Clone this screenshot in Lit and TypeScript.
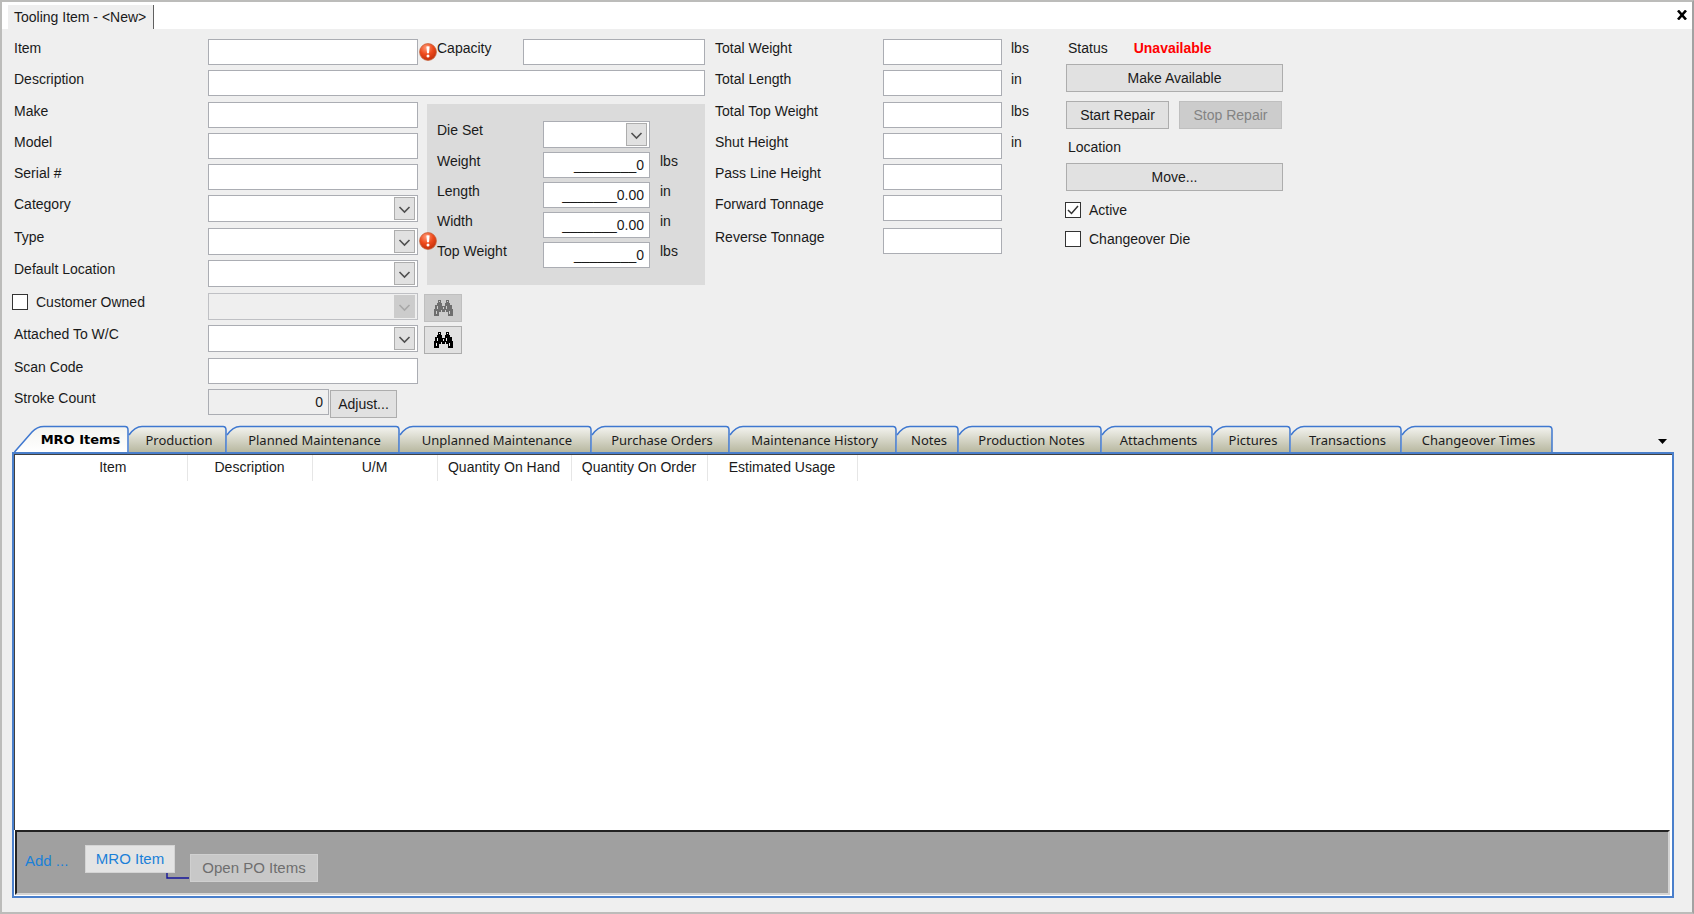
import { LitElement, html, css, svg, nothing } from "lit";
import { customElement, property, state } from "lit/decorators.js";
import { classMap } from "lit/directives/class-map.js";
import { styleMap } from "lit/directives/style-map.js";

const controls = css`
  * {
    box-sizing: border-box;
  }
  input,
  select,
  button {
    margin: 0;
    font: inherit;
    color: inherit;
    border-radius: 0;
  }
  .text {
    width: 100%;
    height: 26px;
    padding: 0 5px;
    border: 1px solid #abadb3;
    background: #fff;
    line-height: 24px;
  }
  .text.number {
    text-align: right;
  }
  .text:read-only.dim {
    background: #efefef;
  }
  .btn {
    height: 28px;
    padding: 0;
    border: 1px solid #adadad;
    background: #e1e1e1;
    line-height: 18px;
  }
  .btn:disabled {
    border-color: #bfbfbf;
    background: #cccccc;
    color: #838383;
  }
`;

@customElement("combo-box")
export class ComboBox extends LitElement {
  static styles = [
    controls,
    css`
      :host {
        display: block;
      }
      .wrap {
        position: relative;
      }
      .select {
        display: block;
        width: 100%;
        height: 27px;
        padding: 0 26px 0 4px;
        appearance: none;
        border: 1px solid #abadb3;
        background: #fff;
      }
      .select:disabled {
        background: #efefef;
      }
      .drop {
        position: absolute;
        top: 2px;
        right: 3px;
        width: 21px;
        height: 23px;
        border: 1px solid #adadad;
        background: #e1e1e1;
        color: #505050;
        pointer-events: none;
      }
      .drop.off {
        border-color: #cccccc;
        background: #cccccc;
        color: #a8a8a8;
      }
      .drop svg {
        display: block;
      }
    `,
  ];
  @property() label = "";
  @property({ type: Boolean }) disabled = false;

  render() {
    return html`<div class="wrap">
      <select class="select" aria-label=${this.label} ?disabled=${this.disabled}>
        <option></option>
      </select>
      <span class=${classMap({ drop: true, off: this.disabled })}>
        <svg width="19" height="21" viewBox="0 0 19 21">
          <path d="M4.5 9 L9.5 14 L14.5 9" fill="none" stroke="currentColor" stroke-width="1.6" />
        </svg>
      </span>
    </div>`;
  }
}

interface Sized {
  name: string;
  width: number;
}

const TABS: Sized[] = [
  { name: "MRO Items", width: 115 },
  { name: "Production", width: 98 },
  { name: "Planned Maintenance", width: 173 },
  { name: "Unplanned Maintenance", width: 192 },
  { name: "Purchase Orders", width: 138 },
  { name: "Maintenance History", width: 167 },
  { name: "Notes", width: 62 },
  { name: "Production Notes", width: 143 },
  { name: "Attachments", width: 111 },
  { name: "Pictures", width: 78 },
  { name: "Transactions", width: 111 },
  { name: "Changeover Times", width: 151 },
];

const COLUMNS: Sized[] = [
  { name: "Item", width: 172 },
  { name: "Description", width: 125 },
  { name: "U/M", width: 125 },
  { name: "Quantity On Hand", width: 134 },
  { name: "Quantity On Order", width: 136 },
  { name: "Estimated Usage", width: 150 },
];

@customElement("tab-strip")
export class TabStrip extends LitElement {
  static styles = [
    controls,
    css`
      :host {
        display: flex;
        align-items: center;
        justify-content: space-between;
        font-family: "Noto Sans", sans-serif;
        font-size: 13px;
        line-height: 18px;
        color: #1c1c1c;
      }
      .tabs {
        display: flex;
      }
      .tab {
        position: relative;
        height: 26px;
        padding: 2px 0 0 2px;
        border: 0;
        background: none;
        white-space: nowrap;
      }
      .tab.active {
        padding-left: 18px;
        font-family: "DejaVu Sans", sans-serif;
        font-weight: 700;
        color: #000;
      }
      .shape {
        position: absolute;
        inset: 0;
        overflow: visible;
      }
      .caption {
        position: relative;
      }
      .more {
        display: grid;
        place-items: center;
        width: 24px;
        height: 22px;
        padding: 4px 0 0;
        border: 0;
        background: none;
      }
    `,
  ];
  @state() private current = 0;

  private shape(index: number, active: boolean) {
    const width = TABS[index].width;
    const outline = active
      ? `M0.5 26 L18 6 Q23 0.5 30 0.5 H${width - 4} Q${width - 1} 0.5 ${width - 1} 4 V26`
      : `M0 9 Q6 0.5 13 0.5 H${width - 4} Q${width - 1} 0.5 ${width - 1} 4 V26`;
    const fill = active ? outline : `M0 26 L${outline.slice(1)}`;
    const face = `face-${index}`;
    return html`<svg class="shape" width=${width} height="26" aria-hidden="true">
      <defs>
        <linearGradient id=${face} x1="0" y1="0" x2="0" y2="1">
          <stop offset="0" stop-color="#f4f4f0" />
          <stop offset="1" stop-color=${active ? "#ffffff" : "#b8b8a0"} />
        </linearGradient>
      </defs>
      ${svg`<path d=${`${fill} Z`} fill=${`url(#${face})`} />
      <path d=${outline} fill="none" stroke="#3f78d0" stroke-width="1.5" />`}
    </svg>`;
  }

  render() {
    return html`<div class="tabs" role="tablist">
        ${TABS.map(
          (tab, i) => html`<button
            role="tab"
            class=${classMap({ tab: true, active: i === this.current })}
            style=${styleMap({ width: `${tab.width}px` })}
            aria-selected=${i === this.current}
            @click=${() => (this.current = i)}
          >
            ${this.shape(i, i === this.current)}<span class="caption">${tab.name}</span>
          </button>`
        )}
      </div>
      <button class="more" aria-label="All tabs">
        <svg width="9" height="5"><path d="M0 0 H9 L4.5 5 Z" fill="#000" /></svg>
      </button>`;
  }
}

@customElement("app-root")
export class AppRoot extends LitElement {
  static styles = [
    controls,
    css`
      :host {
        display: flex;
        flex-direction: column;
        box-sizing: border-box;
        min-height: 100vh;
        border: 2px solid #bcbcba;
        border-right-color: #a2a2a2;
        background: #efefef;
        font-family: "Liberation Sans", Arial, sans-serif;
        font-size: 14px;
        line-height: 18px;
        color: #1a1a1a;
      }
      .titlebar {
        display: flex;
        justify-content: space-between;
        height: 27px;
        padding: 3px 3px 0 6px;
        background: #fff;
      }
      .doc {
        padding: 3px 7px 0 6px;
        border-right: 1px solid #606060;
        background: #efefef;
      }
      .close {
        display: grid;
        place-items: center;
        width: 14px;
        height: 20px;
        padding: 0;
        border: 0;
        background: none;
      }
      .form {
        display: grid;
        grid-template-columns: 194px 210px 19px 86px 182px 10px 168px 119px 64px 217px 1fr;
        grid-template-rows: 31px 32px repeat(3, 31px) 33px 32px 33px 32px 33px 31px 29px;
        align-items: start;
        padding: 10px 12px 8px;
      }
      .c1 { grid-column: 1; }
      .c2 { grid-column: 2; }
      .c3 { grid-column: 3; }
      .c4 { grid-column: 4; }
      .c5 { grid-column: 5; }
      .c7 { grid-column: 7; }
      .c8 { grid-column: 8; }
      .c9 { grid-column: 9; padding-left: 9px; }
      .wide { grid-column: 2 / 6; }
      .r1 { grid-row: 1; }
      .r2 { grid-row: 2; }
      .r3 { grid-row: 3; }
      .r4 { grid-row: 4; }
      .r5 { grid-row: 5; }
      .r6 { grid-row: 6; }
      .r7 { grid-row: 7; }
      .r8 { grid-row: 8; }
      .r9 { grid-row: 9; }
      .r10 { grid-row: 10; }
      .r11 { grid-row: 11; }
      .r12 { grid-row: 12; }
      .error {
        z-index: 1;
        padding: 4px 0 0 1px;
      }
      .error svg,
      .find svg {
        display: block;
      }
      .die {
        grid-column: 3 / 6;
        grid-row: 3 / 9;
        display: grid;
        grid-template-columns: 106px 107px 1fr;
        grid-template-rows: 31px repeat(4, 30px);
        align-items: start;
        height: 181px;
        margin: 2px 0 0 9px;
        padding: 17px 10px 0;
        background: #dbdbdb;
      }
      .unit {
        padding-left: 10px;
      }
      .find {
        grid-column: 3 / 5;
        display: grid;
        place-items: center;
        justify-self: start;
        width: 38px;
        margin: 1px 0 0 6px;
      }
      .stroke {
        display: flex;
        gap: 1px;
        grid-column: 2;
      }
      .stroke .text {
        width: 121px;
      }
      .adjust {
        width: 67px;
        margin-top: 1px;
      }
      .status {
        grid-column: 10;
        grid-row: 1 / 10;
        display: flex;
        flex-direction: column;
      }
      .line {
        display: flex;
        padding-left: 2px;
      }
      .state {
        padding-left: 26px;
        font-weight: 700;
        color: #f00;
      }
      .status .btn {
        margin: 7px 0 9px;
      }
      .pair {
        display: grid;
        grid-template-columns: 103px 103px;
        gap: 10px;
      }
      .status .pair .btn {
        margin: 0 0 9px;
      }
      .check {
        display: flex;
        align-items: center;
        gap: 8px;
        margin: 1px 0 10px -1px;
      }
      .check.owner {
        grid-column: 1;
        margin: 0 0 0 -2px;
      }
      .box {
        flex: none;
        width: 16px;
        height: 16px;
        appearance: none;
        border: 1px solid #333;
        background: #fff;
      }
      .tick {
        display: grid;
      }
      .tick > * {
        grid-area: 1 / 1;
      }
      .tick svg {
        display: none;
        pointer-events: none;
      }
      .box:checked + svg {
        display: block;
      }
      .lower {
        display: flex;
        flex: 1;
        flex-direction: column;
        padding: 0 18px 14px 10px;
      }
      tab-strip {
        padding-left: 2px;
      }
      .sheet {
        display: flex;
        flex: 1;
        flex-direction: column;
        border: 2px solid #4a7fcb;
        background: #fff;
      }
      .grid {
        flex: 1;
        min-height: 120px;
        border-top: 1px solid #404040;
        border-left: 1px solid #404040;
      }
      .table {
        border-collapse: collapse;
        table-layout: fixed;
      }
      .head {
        height: 26px;
        padding: 0 0 3px;
        border-right: 1px solid #e6e6e6;
        font-weight: 400;
        text-align: center;
        white-space: nowrap;
      }
      .head:first-child {
        padding-left: 24px;
      }
      .actions {
        display: flex;
        align-items: flex-start;
        height: 65px;
        margin: 0 2px 1px 1px;
        padding: 13px 8px 0;
        border: 2px solid #222;
        border-right-color: #d4d4d4;
        border-bottom-color: #d4d4d4;
        background: #a0a0a0;
        font-size: 15px;
        color: #1a80d8;
      }
      .add {
        width: 60px;
        padding-top: 7px;
      }
      .act {
        height: 28px;
        padding: 0;
        border: 1px solid #d4d4d4;
        background: #e4e4e4;
      }
      .mro {
        width: 90px;
      }
      .open {
        width: 128px;
        margin-top: 9px;
      }
      .act:disabled {
        border-color: #d0d0d0;
        background: #c8c8c8;
        color: #6e6e6e;
      }
      .link {
        margin: 28px 0 0 -9px;
      }
    `,
  ];

  private field(label: string, row: number, col: number, cls = "") {
    const id = label.toLowerCase().replace(/\W+/g, "-");
    return html`<label class="c${col} r${row}" for=${id}>${label}</label>
      <input id=${id} class="text ${cls || `c${col + 1}`} r${row}" type="text" />`;
  }

  private combo(label: string, row: number) {
    return html`<label class="c1 r${row}">${label}</label>
      <combo-box class="c2 r${row}" label=${label}></combo-box>`;
  }

  private error(row: number) {
    const ball = `ball-${row}`;
    return html`<span class="error c3 r${row}" role="img" aria-label="Required">
      <svg width="18" height="18" viewBox="0 0 18 18">
        <defs>
          <radialGradient id=${ball} cx="0.4" cy="0.25" r="0.8">
            <stop offset="0" stop-color="#ff9a78" />
            <stop offset="0.5" stop-color="#ee4a1c" />
            <stop offset="1" stop-color="#bd2c08" />
          </radialGradient>
        </defs>
        <circle cx="9" cy="9" r="8.4" fill="url(#${ball})" stroke="#c8643f" stroke-width="0.8" />
        <path d="M7.4 3.6 Q9 2.8 10.6 3.6 L10 10.2 H8 Z" fill="#fff" />
        <circle cx="9" cy="13" r="1.5" fill="#fff" />
      </svg>
    </span>`;
  }

  private find(row: number, label: string, disabled: boolean) {
    const ink = disabled ? "#6e6e6e" : "#000";
    const gap = disabled ? "#cccccc" : "#f0f0f0";
    return html`<button class="btn find r${row}" aria-label=${label} ?disabled=${disabled}>
      <svg width="19" height="17" viewBox="0 0 19 17">
        <path
          d="M4 0 H7 V3 H8 V6 H11 V3 H12 V0 H15 V3 H16 V5 H18 V9 H19 V16 H14 V12 H12 V10 H11 V12 H8 V10 H7 V12 H5 V16 H0 V9 H1 V5 H3 V3 H4 Z"
          fill=${ink}
        />
        <path
          d="M5 1 h1 v1 h-1 Z M13 1 h1 v1 h-1 Z M3 6 h1 v3 h-1 Z M2 11 h1 v3 h-1 Z M12 6 h1 v3 h-1 Z M15 11 h1 v3 h-1 Z M9 7 h1 v2 h-1 Z"
          fill=${gap}
        />
      </svg>
    </button>`;
  }

  private measure(label: string, value: string, unit: string) {
    const id = `die-${label.toLowerCase().replace(" ", "-")}`;
    return html`<label for=${id}>${label}</label>
      <input id=${id} class="text number" type="text" .value=${value} />
      <span class="unit">${unit}</span>`;
  }

  private check(label: string, checked: boolean, cls = "") {
    return html`<label class="check ${cls}">
      <span class="tick">
        <input class="box" type="checkbox" .checked=${checked} />
        <svg width="16" height="16"><path d="M3 8 L6.5 11.5 L13 4" fill="none" stroke="#333" stroke-width="1.5" /></svg>
      </span>
      ${label}
    </label>`;
  }

  render() {
    const totals: [string, string][] = [
      ["Total Weight", "lbs"],
      ["Total Length", "in"],
      ["Total Top Weight", "lbs"],
      ["Shut Height", "in"],
      ["Pass Line Height", ""],
      ["Forward Tonnage", ""],
      ["Reverse Tonnage", ""],
    ];
    return html`
      <header class="titlebar">
        <span class="doc">Tooling Item - &lt;New&gt;</span>
        <button class="close" aria-label="Close">
          <svg width="10" height="10"><path d="M1 0.5 L9 9.5 M9 0.5 L1 9.5" stroke="#000" stroke-width="2.6" /></svg>
        </button>
      </header>
      <section class="form">
        ${this.field("Item", 1, 1)} ${this.error(1)} ${this.field("Capacity", 1, 4)}
        ${this.field("Description", 2, 1, "wide")} ${this.field("Make", 3, 1)}
        ${this.field("Model", 4, 1)} ${this.field("Serial #", 5, 1)}
        ${this.combo("Category", 6)} ${this.combo("Type", 7)} ${this.error(7)}
        ${this.combo("Default Location", 8)} ${this.check("Customer Owned", false, "owner r9")}
        <combo-box class="c2 r9" label="Customer" disabled></combo-box>
        ${this.find(9, "Find customer", true)} ${this.combo("Attached To W/C", 10)}
        ${this.find(10, "Find work center", false)} ${this.field("Scan Code", 11, 1)}
        <label class="c1 r12" for="strokes">Stroke Count</label>
        <div class="stroke r12">
          <input id="strokes" class="text number dim" type="text" readonly .value=${"0"} />
          <button class="btn adjust">Adjust...</button>
        </div>
        <div class="die">
          <label>Die Set</label>
          <combo-box label="Die Set"></combo-box>
          <span></span>
          ${this.measure("Weight", "________0", "lbs")} ${this.measure("Length", "_______0.00", "in")}
          ${this.measure("Width", "_______0.00", "in")} ${this.measure("Top Weight", "________0", "lbs")}
        </div>
        ${totals.map(
          ([name, unit], i) => html`${this.field(name, i + 1, 7)}
          ${unit ? html`<span class="c9 r${i + 1}">${unit}</span>` : nothing}`
        )}
        <div class="status">
          <div class="line">Status <span class="state">Unavailable</span></div>
          <button class="btn">Make Available</button>
          <div class="pair">
            <button class="btn">Start Repair</button>
            <button class="btn" disabled>Stop Repair</button>
          </div>
          <div class="line">Location</div>
          <button class="btn">Move...</button>
          ${this.check("Active", true)} ${this.check("Changeover Die", false)}
        </div>
      </section>
      <section class="lower">
        <tab-strip></tab-strip>
        <div class="sheet">
          <div class="grid">
            <table class="table">
              <thead>
                <tr>
                  ${COLUMNS.map(
                    (c) => html`<th class="head" scope="col" style=${styleMap({ width: `${c.width}px` })}>${c.name}</th>`
                  )}
                </tr>
              </thead>
            </table>
          </div>
          <div class="actions">
            <span class="add">Add ...</span>
            <button class="act mro">MRO Item</button>
            <svg class="link" width="24" height="6"><path d="M1 0 V5 H23" fill="none" stroke="#14149a" stroke-width="1.4" /></svg>
            <button class="act open" disabled>Open PO Items</button>
          </div>
        </div>
      </section>
    `;
  }
}
